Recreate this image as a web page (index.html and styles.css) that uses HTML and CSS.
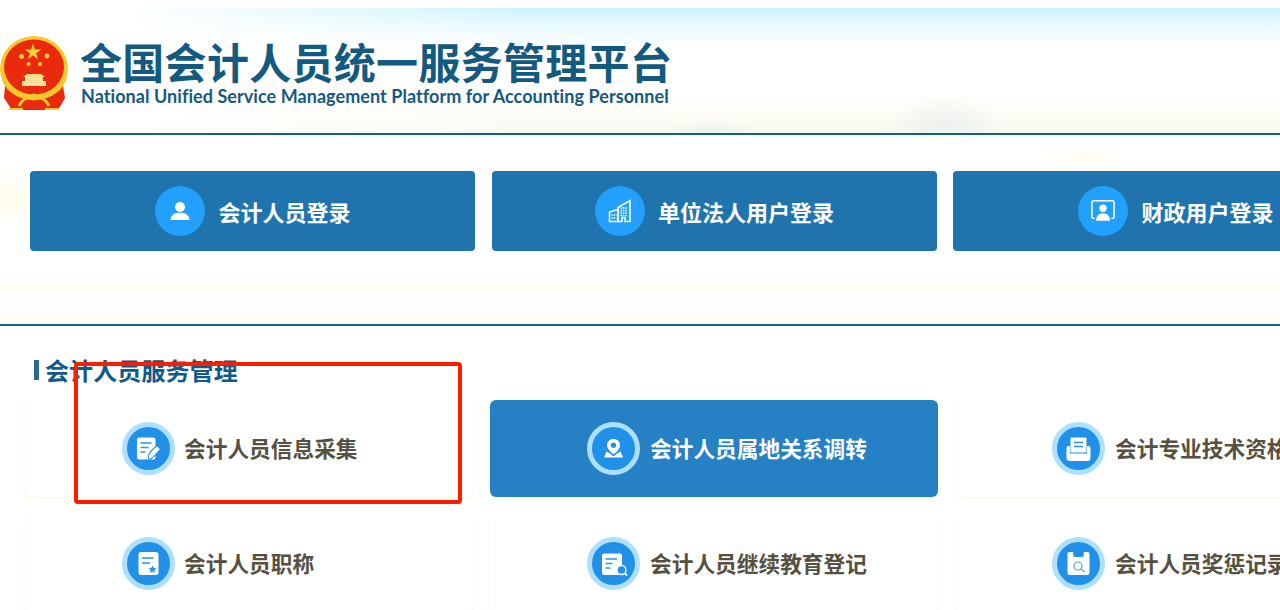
FILE: index.html
```html
<!DOCTYPE html>
<html lang="zh-CN">
<head>
    <meta charset="UTF-8">
    <meta name="viewport" content="width=device-width, initial-scale=1.0">
    <link rel="stylesheet" href="styles.css">
    <title>全国会计人员统一服务管理平台</title>
</head>
<body>
    <header class="header">
        <svg class="emblem" viewBox="0 0 68 74">
            <ellipse cx="34" cy="33" rx="34" ry="33" fill="#f4c92e"/>
            <ellipse cx="34" cy="31" rx="30" ry="27.500" fill="#ea2a0c"/>
            <path d="M33 7.500l1.900 6h6.300l-5.100 3.700 1.900 6-5-3.700-5 3.700 1.900-6-5.100-3.700h6.300z" fill="#f8d23c"/>
            <circle cx="21.500" cy="20.500" r="2.400" fill="#f8d23c"/>
            <circle cx="47" cy="20" r="2.400" fill="#f8d23c"/>
            <circle cx="28.500" cy="28" r="2" fill="#f8d23c"/>
            <circle cx="40" cy="28" r="2" fill="#f8d23c"/>
            <path d="M27 38h14l4 3H23z" fill="#f6dc86"/>
            <path d="M25 41h18v4h3v5H22v-5h3z" fill="#f6e29c"/>
            <path d="M5 50c6 9 16 13 29 13s23-4 29-13l2 12-7 12H12L4 62z" fill="#ea2a0c"/>
            <path d="M5 44c5 12 16 18 29 18s24-6 29-18" fill="none" stroke="#f4c92e" stroke-width="4"/>
            <path d="M19 70c4-8 9-9 15-9s11 1 15 9" fill="none" stroke="#f4c92e" stroke-width="3"/>
            <path d="M9 73h14M45 73h14" stroke="#f4c92e" stroke-width="2"/>
            <circle cx="34" cy="61" r="3.500" fill="#f4c92e"/>
        </svg>
        <div class="brand">
            <div class="brand-cn">全国会计人员统一服务管理平台</div>
            <div class="brand-en">National Unified Service Management Platform for Accounting Personnel</div>
        </div>
    </header>

    <section class="login-band">
        <a class="login-btn">
            <span class="login-icon">
                <svg viewBox="0 0 24 24"><circle cx="12" cy="8" r="5" fill="#fff"/><path d="M2.500 21c0-4.500 3.500-7.200 9.500-7.200s9.500 2.700 9.500 7.200z" fill="#fff"/></svg>
            </span>
            <span>会计人员登录</span>
        </a>
        <a class="login-btn">
            <span class="login-icon">
                <svg viewBox="0 0 24 24">
                    <path d="M10 22.500V8.500l12-7v21h-5v-4h-3v4z" fill="none" stroke="#fff" stroke-width="1.500"/>
                    <path d="M1.500 22.500v-9.500l8.500-2.500v12z" fill="#22a0fb" stroke="#fff" stroke-width="1.500"/>
                    <path d="M12.500 9h7M12.500 11.500h7M12.500 14h7M12.500 16.500h7" stroke="#fff" stroke-width="1.300" stroke-dasharray="1.500 .8"/>
                    <path d="M3.500 16h5M3.500 19h5" stroke="#fff" stroke-width="1.400" stroke-dasharray="1.400 .8"/>
                </svg>
            </span>
            <span>单位法人用户登录</span>
        </a>
        <a class="login-btn">
            <span class="login-icon">
                <svg viewBox="0 0 26 24">
                    <path d="M4 20H3a2 2 0 0 1-2-2V3a2 2 0 0 1 2-2h20a2 2 0 0 1 2 2v15a2 2 0 0 1-2 2h-1" fill="none" stroke="#fff" stroke-width="1.600"/>
                    <circle cx="13" cy="9" r="4" fill="#fff"/>
                    <path d="M5.500 22.500c0-5 3-8 7.500-8s7.500 3 7.500 8z" fill="#fff"/>
                </svg>
            </span>
            <span>财政用户登录</span>
        </a>
    </section>

    <section class="service">
        <h2 class="service-title">会计人员服务管理</h2>
        <div class="card-grid">
            <a class="card">
                <span class="card-icon">
                    <svg viewBox="0 0 25 25">
                        <rect x="1" y="1.500" width="18.500" height="22" rx="2.500" fill="#fff"/>
                        <path d="M4.500 7h11M4.500 11.500h8M4.500 16h5" stroke="#2a94e8" stroke-width="1.500"/>
                        <path d="M12.500 23c-1.500-3.500.5-6.500 8.500-13.500l3.500 3.500c-6 7-8.500 10.500-12 10z" fill="#fff" stroke="#2a94e8" stroke-width="1.100"/>
                    </svg>
                </span>
                <span class="card-text">会计人员信息采集</span>
            </a>
            <a class="card card-active">
                <span class="card-icon">
                    <svg viewBox="0 0 25 25">
                        <path d="M12.500 3c-3.800 0-6.500 2.700-6.500 6.200 0 3.500 3.500 6.700 6.500 9.300 3-2.600 6.500-5.800 6.500-9.300C19 5.700 16.300 3 12.500 3z" fill="#fff"/>
                        <circle cx="12.500" cy="9.300" r="2.700" fill="#2090e8"/>
                        <path d="M5.500 15.500L3 21.500h19l-2.500-6-3.500 2-3.500 3-3.500-3z" fill="#fff"/>
                    </svg>
                </span>
                <span class="card-text">会计人员属地关系调转</span>
            </a>
            <a class="card">
                <span class="card-icon">
                    <svg viewBox="0 0 25 25">
                        <rect x="4.500" y="1.500" width="16" height="15" rx="1" fill="#fff"/>
                        <path d="M8 6.500h9M8 10.500h9" stroke="#2a94e8" stroke-width="1.400"/>
                        <path d="M.5 12a2 2 0 0 1 2-2h1.500v7.500h17V10h1.500a2 2 0 0 1 2 2v10a3 3 0 0 1-3 3h-18a3 3 0 0 1-3-3z" fill="#fff"/>
                    </svg>
                </span>
                <span class="card-text">会计专业技术资格信息</span>
            </a>
            <a class="card">
                <span class="card-icon">
                    <svg viewBox="0 0 25 25">
                        <rect x="2.500" y="1" width="20" height="23" rx="2.500" fill="#fff"/>
                        <path d="M6 7h11.500M6 12h8" stroke="#2a94e8" stroke-width="1.500"/>
                        <path d="M16.500 14.500l1.300 2.500 2.700.3-2 1.900.5 2.700-2.500-1.300-2.500 1.300.5-2.700-2-1.900 2.700-.3z" fill="#2a94e8"/>
                    </svg>
                </span>
                <span class="card-text">会计人员职称</span>
            </a>
            <a class="card">
                <span class="card-icon">
                    <svg viewBox="0 0 25 25">
                        <rect x="1" y="2.500" width="20" height="21.500" rx="2" fill="#fff"/>
                        <path d="M4.500 8h11.500M4.500 12.500h7M4.500 17h5" stroke="#2a94e8" stroke-width="1.600"/>
                        <circle cx="20.500" cy="19" r="4.500" fill="#2090e8" stroke="#fff" stroke-width="1.300"/>
                        <path d="M23.500 22l2.500 2.500" stroke="#fff" stroke-width="1.800"/>
                    </svg>
                </span>
                <span class="card-text">会计人员继续教育登记</span>
            </a>
            <a class="card">
                <span class="card-icon">
                    <svg viewBox="0 0 25 25">
                        <path d="M1.500 3a2 2 0 0 1 2-2h3.700v3a2 2 0 0 0 2 2h6.600a2 2 0 0 0 2-2V1h3.700a2 2 0 0 1 2 2v19a2 2 0 0 1-2 2h-18a2 2 0 0 1-2-2z" fill="#fff"/>
                        <circle cx="12" cy="15" r="4" fill="none" stroke="#4aa3e0" stroke-width="1.200"/>
                        <path d="M15 18l3.500 3" stroke="#4aa3e0" stroke-width="1.200"/>
                    </svg>
                </span>
                <span class="card-text">会计人员奖惩记录</span>
            </a>
        </div>
    </section>

    <!-- red annotation drawn over the first card -->
    <div class="mark-box"></div>
</body>
</html>
```

FILE: styles.css
```css
* {
    box-sizing: border-box;
}

html,
body {
    height: 610px;
    overflow: hidden;
}

body {
    position: relative;
    margin: 0;
    width: 1280px;
    background-color: #fff;
    font-family: "Noto Sans CJK SC", "Liberation Sans", sans-serif;
}

/* header picture: sky on top, hills and haze at the bottom */
.header {
    display: flex;
    align-items: flex-start;
    height: 135px;
    padding-top: 36px;
    border-bottom: 2px solid #15608a;
    background-color: #fff;
    background-repeat: no-repeat;
    background-image:
        radial-gradient(ellipse 60px 36px at 945px 130px, #eef2ee 20%, rgba(240, 244, 240, 0) 100%),
        radial-gradient(ellipse 50px 14px at 712px 134px, #eef2ee 20%, rgba(240, 244, 240, 0) 100%),
        linear-gradient(90deg, #fff 120px, rgba(255, 255, 255, 0) 520px),
        linear-gradient(180deg, #fff 0, #fff 8px, #cdf4fd 8px, #e6f9fd 24px, #fff 46px, #fff 92px, #fffdf7 112px, #f9f8f0 133px);
}

.emblem {
    flex: none;
    width: 68px;
    height: 74px;
}

.brand {
    margin-left: 12px;
    margin-top: -2px;
    color: #14597f;
}

.brand-cn {
    font-size: 42px;
    font-weight: 700;
    line-height: 54px;
    letter-spacing: .3px;
}

.brand-en {
    margin-top: -2px;
    margin-left: 1px;
    font-family: Lato, sans-serif;
    font-size: 18px;
    font-weight: 700;
    line-height: 20px;
    letter-spacing: .06px;
    white-space: nowrap;
}

.login-band {
    display: grid;
    grid-template-columns: repeat(3, 445px);
    column-gap: 16.5px;
    height: 191px;
    padding: 36px 0 0 30px;
    border-bottom: 2px solid #15608a;
    background-color: #fff;
    background-repeat: no-repeat;
    background-image:
        radial-gradient(ellipse 70px 30px at 0 62px, #fffbe9, rgba(255, 251, 233, 0)),
        radial-gradient(ellipse 50px 12px at 1085px 22px, #fffdf1, rgba(255, 253, 241, 0)),
        linear-gradient(180deg, #fff 148px, #fffdf0 153px, #fff 160px, #fff 178px, #fffcea 189px);
}

.login-btn {
    display: flex;
    align-items: center;
    justify-content: center;
    gap: 13px;
    height: 80px;
    padding-left: 1px;
    border-radius: 4px;
    background-color: #1f74ae;
    color: #fff;
    font-size: 22px;
    font-weight: 700;
    white-space: nowrap;
}

.login-icon {
    display: flex;
    align-items: center;
    justify-content: center;
    flex: none;
    width: 50px;
    height: 50px;
    border-radius: 50%;
    background-color: #22a0fb;
}

.login-icon svg {
    width: 24px;
    height: 24px;
}

.service {
    padding: 32px 0 0 25px;
}

.service-title {
    margin: 0 0 14px 9px;
    padding-left: 11px;
    height: 28px;
    color: #0f5a8a;
    font-size: 24px;
    font-weight: 700;
    line-height: 24px;
    letter-spacing: .1px;
    background: linear-gradient(#2a6a90, #2a6a90) 0 2px / 5px 20px no-repeat;
    white-space: nowrap;
}

.card-grid {
    display: grid;
    grid-template-columns: repeat(3, 448px);
    grid-auto-rows: 97px;
    gap: 18px 17px;
}

.card {
    display: flex;
    align-items: center;
    gap: 10px;
    padding-left: 97px;
    border-radius: 6px;
    background-color: #fff;
    box-shadow: 0 1px 3px rgba(253, 240, 200, 0.8);
    color: #565041;
    font-size: 21.7px;
    font-weight: 700;
    white-space: nowrap;
}

.card-text {
    margin-top: -2px;
}

.card:nth-child(3n+1) .card-text {
    margin-left: -1px;
}

.card-active {
    background-color: #2680c4;
    color: #fff;
}

.card-icon {
    display: flex;
    align-items: center;
    justify-content: center;
    flex: none;
    width: 53px;
    height: 53px;
    border: 5px solid #ade0ff;
    border-radius: 50%;
    background-color: #2090e8;
}

.card-icon svg {
    width: 25px;
    height: 25px;
    overflow: visible;
}

.mark-box {
    position: absolute;
    left: 74px;
    top: 362px;
    width: 388px;
    height: 142px;
    border: 4px solid #fa1d00;
    border-radius: 4px;
}
```
